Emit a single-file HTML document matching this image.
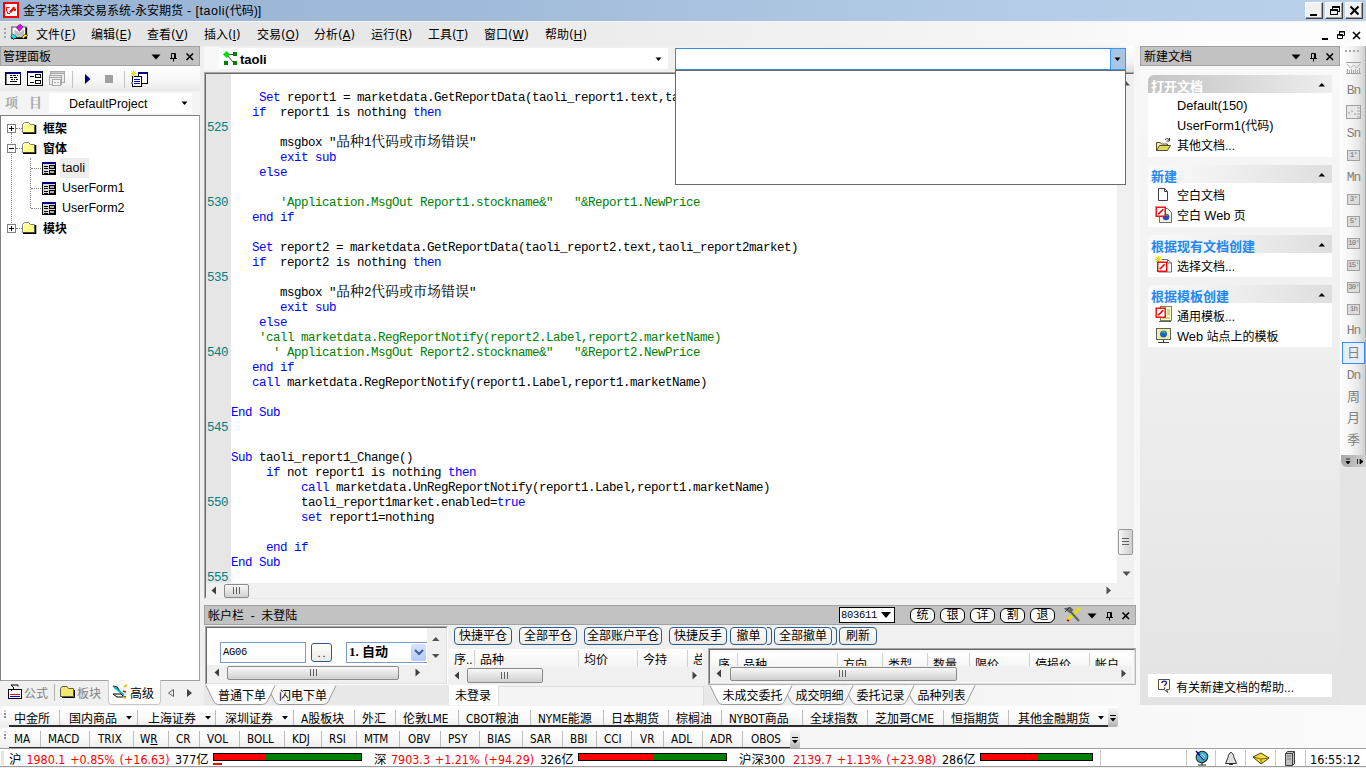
<!DOCTYPE html>
<html><head><meta charset="utf-8"><title>金字塔决策交易系统-永安期货</title>
<style>
*{box-sizing:border-box;margin:0;padding:0}
html,body{width:1366px;height:768px;overflow:hidden;background:#f0f0f0}
body{position:relative;font-family:"Liberation Sans","Noto Sans CJK SC",sans-serif;font-size:12px;color:#000}
.a{position:absolute;white-space:nowrap}
.t{position:absolute;white-space:nowrap;line-height:16px;height:16px;font-size:12px}
#title{left:0;top:0;width:1366px;height:21px;background:linear-gradient(90deg,#99b4d4 0,#a0bbd9 35%,#b4cce7 75%,#b9d1ea 100%)}
.wb{position:absolute;top:2px;width:18px;height:17px;background:#f0f0f0;border:1px solid;border-color:#fff #404040 #404040 #fff;box-shadow:inset -1px -1px 0 #a0a0a0}
#menubar{left:0;top:21px;width:1366px;height:25px;background:linear-gradient(90deg,#e4e4e4 0,#e8e8e8 30%,#eeeeee 50%,#f5f5f5 73%,#fcfcfc 88%,#fdfdfd 100%);border-top:1px solid #f4f4f4}
.phead{position:absolute;background:#c2c2c2;border:1px solid #a2a2a2;height:20px}
.code{font-family:"Liberation Mono","Noto Sans CJK SC",monospace;font-size:12.5px;letter-spacing:-.5px;line-height:15px;height:15px;position:absolute;white-space:pre;color:#000}
.code b{font-weight:normal;color:#0000ff}
.code i{font-style:normal;color:#008000}
.code s{text-decoration:none;font-size:14px;letter-spacing:0;font-family:"Noto Serif CJK SC","Noto Sans CJK SC",serif;line-height:0}
.ln{position:absolute;left:207px;font-family:"Liberation Mono",monospace;font-size:12.5px;letter-spacing:-.5px;line-height:15px;height:15px;color:#008080}
.sep{position:absolute;width:1px;background:#b8b8b8}
.tb{position:absolute;height:19px;border-bottom:2px solid #2c2c2c}
.btn{position:absolute;height:18px;border:1px solid #2c5a8c;border-radius:4px;background:linear-gradient(#ffffff,#ecebe6);font-size:12px;line-height:17px;text-align:center;white-space:nowrap}
.rb{position:absolute;top:608px;width:25px;height:15px;border:1px solid #000;border-radius:6px;background:#fff;font-size:12px;line-height:13px;text-align:center}
.gh{position:absolute;left:1148px;width:184px;height:18px;overflow:hidden;font-weight:bold;font-size:13px;line-height:23px;padding-left:3px;color:#2488f4;background:linear-gradient(90deg,#fafafa,#f0f0f0 40%,#dedede);border-radius:6px 0 0 0}
.gb{position:absolute;left:1148px;width:184px;background:#fff}
.gi{position:absolute;left:1177px;font-size:12px;line-height:16px;white-space:nowrap}
.gl{font-size:12.8px}
.vt{position:absolute;left:1341px;width:25px;text-align:center;font-size:12px;line-height:14px;color:#808080;white-space:nowrap}
.vb{position:absolute;left:1347px;width:13px;height:11px;border:1px solid #a0a0a0;background:#dcdcdc;color:#707070;font-size:7.5px;line-height:9px;text-align:center;font-family:"Liberation Mono",monospace;white-space:nowrap;overflow:hidden;letter-spacing:-.8px}
.st{position:absolute;top:751px;height:17px;line-height:17px;font-size:12.4px;white-space:nowrap;font-family:"DejaVu Sans Condensed","Noto Sans CJK SC",sans-serif}
.l{font-size:11.6px;font-family:"DejaVu Sans Condensed",sans-serif}
.red{color:#ff0000}
.tab{position:absolute;font-size:12px;line-height:16px;white-space:nowrap}
</style></head><body>

<div class="a" id="title"></div>
<svg class="a" style="left:3px;top:2px" width="16" height="16" viewBox="0 0 16 16"><rect x="0" y="0" width="16" height="16" fill="#ff0000"/><rect x="2" y="2" width="12" height="12" fill="#fff"/><path d="M3.5 5.5h3M3.5 5.5v4M4.5 9.5v2h2.5" stroke="#f00" stroke-width="1" fill="none"/><path d="M6 10L10.5 4.5l2 1.5L8 11z" fill="#f00"/><rect x="11" y="7" width="2" height="2" fill="#f00"/></svg>
<div class="t" style="left:23px;top:3px;font-size:12px">金字塔决策交易系统-永安期货<span style="font-size:12.5px;letter-spacing:.5px"> - [taoli(</span>代码<span style="font-size:12.5px">)]</span></div>
<div class="wb" style="left:1305px"></div>
<div class="wb" style="left:1325px"></div>
<div class="wb" style="left:1345px"></div>
<svg class="a" style="left:1305px;top:2px" width="60" height="17" viewBox="0 0 60 17"><rect x="5" y="12" width="7" height="2" fill="#000"/><path d="M27.5 4.5h7v5h-7zM27.5 5.5h7M25.5 7.5h7v5h-7zM25.5 8.5h7" stroke="#000" fill="#f0f0f0" stroke-width="1"/><path d="M27.5 4.5h7v5h-7z" fill="none" stroke="#000"/><path d="M25.5 7.5h7v5h-7z" fill="#f0f0f0" stroke="#000"/><path d="M25 8.5h8M27 5.5h8" stroke="#000"/><path d="M45.5 4.5l8 8M53.5 4.5l-8 8" stroke="#000" stroke-width="2"/></svg>
<div class="a" id="menubar"></div>
<svg class="a" style="left:3px;top:27px" width="4" height="14"><rect x="1" y="1" width="2" height="2" fill="#a0a0a0"/><rect x="1" y="5" width="2" height="2" fill="#a0a0a0"/><rect x="1" y="9" width="2" height="2" fill="#a0a0a0"/></svg>
<svg class="a" style="left:10px;top:24px" width="19" height="18" viewBox="0 0 19 18"><rect x="1" y="2" width="16" height="13" fill="#fff"/><path d="M1.800 15V3h15" stroke="#808080" stroke-width="1.600" fill="none"/><path d="M16.200 3.500v10.700H1.500" stroke="#000" stroke-width="1.800" fill="none"/><path d="M4.500 5.500L9 8.500l5-3V13H4.500z" fill="#c0c0c0"/><path d="M8.500 1.200l2-.7 2 2.200-1 2.500-2.200 2-1.300-2.200-1.500-.8z" fill="#ff00ff" stroke="#000" stroke-width=".5"/><path d="M.6 12.500l2-2.200 3 1.500 1.200 2.200-2.300.3-1 1.500-1.200-2.300z" fill="#00ffff" stroke="#000" stroke-width=".5"/><path d="M12 13.300l2.500-3 3.200.7-1.200 1.500-2 .6-.8 2z" fill="#ffff00" stroke="#000" stroke-width=".5"/></svg>
<div class="t" style="left:36px;top:27px;font-size:12px;font-family:'DejaVu Sans Condensed','Noto Sans CJK SC',sans-serif">文件<span style="font-size:13px">(<u>F</u>)</span></div>
<div class="t" style="left:91px;top:27px;font-size:12px;font-family:'DejaVu Sans Condensed','Noto Sans CJK SC',sans-serif">编辑<span style="font-size:13px">(<u>E</u>)</span></div>
<div class="t" style="left:147px;top:27px;font-size:12px;font-family:'DejaVu Sans Condensed','Noto Sans CJK SC',sans-serif">查看<span style="font-size:13px">(<u>V</u>)</span></div>
<div class="t" style="left:204px;top:27px;font-size:12px;font-family:'DejaVu Sans Condensed','Noto Sans CJK SC',sans-serif">插入<span style="font-size:13px">(<u>I</u>)</span></div>
<div class="t" style="left:257px;top:27px;font-size:12px;font-family:'DejaVu Sans Condensed','Noto Sans CJK SC',sans-serif">交易<span style="font-size:13px">(<u>O</u>)</span></div>
<div class="t" style="left:314px;top:27px;font-size:12px;font-family:'DejaVu Sans Condensed','Noto Sans CJK SC',sans-serif">分析<span style="font-size:13px">(<u>A</u>)</span></div>
<div class="t" style="left:371px;top:27px;font-size:12px;font-family:'DejaVu Sans Condensed','Noto Sans CJK SC',sans-serif">运行<span style="font-size:13px">(<u>R</u>)</span></div>
<div class="t" style="left:428px;top:27px;font-size:12px;font-family:'DejaVu Sans Condensed','Noto Sans CJK SC',sans-serif">工具<span style="font-size:13px">(<u>T</u>)</span></div>
<div class="t" style="left:484px;top:27px;font-size:12px;font-family:'DejaVu Sans Condensed','Noto Sans CJK SC',sans-serif">窗口<span style="font-size:13px">(<u>W</u>)</span></div>
<div class="t" style="left:545px;top:27px;font-size:12px;font-family:'DejaVu Sans Condensed','Noto Sans CJK SC',sans-serif">帮助<span style="font-size:13px">(<u>H</u>)</span></div>
<svg class="a" style="left:1318px;top:29px" width="46" height="14" viewBox="0 0 46 14"><rect x="4" y="9" width="6" height="2" fill="#000"/><path d="M21.5 2.5h5v4h-5zM19.5 5.5h5v4h-5z" fill="#fdfdfd" stroke="#000"/><path d="M19 6h6M21 3h6" stroke="#000"/><path d="M35 3l7 7M42 3l-7 7" stroke="#000" stroke-width="1.6"/></svg>
<div class="phead" style="left:0;top:46px;width:200px"></div>
<div class="t" style="left:3px;top:49px;font-size:12px">管理面板</div>
<svg class="a" style="left:150px;top:50px" width="48" height="14" viewBox="0 0 48 14"><path d="M1.500 4.500h9l-4.500 5z" fill="#000"/><path d="M21.500 8v-4.500h4v4.500M24.500 3.500v4.500" stroke="#000" fill="none"/><path d="M20 8.500h7M23.500 9v2.500" stroke="#000" fill="none"/><path d="M36.500 3.500l6.500 6.500M43 3.500l-6.500 6.500" stroke="#000" stroke-width="1.600"/></svg>
<div class="a" style="left:0;top:66px;width:200px;height:25px;background:linear-gradient(#ffffff,#f6f6f6 60%,#e8e8e8)"></div>
<svg class="a" style="left:4px;top:70px" width="150" height="18" viewBox="0 0 150 18" shape-rendering="crispEdges"><rect x="1" y="2" width="16" height="13" fill="#000"/><rect x="2" y="4" width="14" height="10" fill="#fff"/><rect x="1" y="2" width="16" height="2" fill="#000080"/><rect x="2" y="4" width="1" height="10" fill="#808080"/><path d="M6 5.500h2M9 5.500h3M13 5.500h1M6 7.500h3M10 7.500h3M7 9.500h2M10 9.500h1M12 9.500h2M6 11.500h7" stroke="#000"/><rect x="23" y="1" width="16" height="15" fill="#000"/><rect x="24" y="3" width="14" height="12" fill="#fff"/><rect x="23" y="1" width="16" height="2" fill="#000080"/><rect x="31" y="4" width="6" height="4" fill="#000"/><rect x="32" y="5" width="4" height="2" fill="#fff"/><rect x="31" y="10" width="6" height="4" fill="#000"/><rect x="32" y="11" width="4" height="2" fill="#fff"/><path d="M26 6.500h4M26 12.500h4" stroke="#000"/><rect x="46.500" y="1.500" width="14" height="11" fill="#ececec" stroke="#a8a8a8"/><rect x="46.500" y="1.500" width="14" height="2" fill="#c8c8c8" stroke="#a8a8a8"/><rect x="45.500" y="5.500" width="12" height="9" fill="#ececec" stroke="#a8a8a8"/><path d="M46 7.500h11" stroke="#a8a8a8"/><rect x="48.500" y="9.500" width="8" height="6" fill="#f4f4f4" stroke="#a8a8a8"/><path d="M50 12.500h2M53 12.500h2" stroke="#a8a8a8"/><path d="M68.500 1v17" stroke="#c4c4c4"/><path d="M81 4l5.500 5L81 14z" fill="#000080" shape-rendering="geometricPrecision"/><rect x="101" y="5" width="8" height="8" fill="#a0a0a0"/><path d="M120.500 1v17" stroke="#c4c4c4"/><rect x="134" y="2" width="10" height="12" fill="#000"/><rect x="135" y="4" width="8" height="9" fill="#fff"/><rect x="134" y="2" width="10" height="2" fill="#000080"/><rect x="128" y="6" width="10" height="11" fill="#000"/><rect x="129" y="7" width="8" height="9" fill="#fff"/><path d="M130 9.500h6M130 11.500h6M130 13.500h6" stroke="#0000c0"/><rect x="127" y="12" width="2" height="2" fill="#808080"/><path d="M127 1l5 5M132 1l-5 5M129.500 0v8M127 3.500h5" stroke="#e8e800" shape-rendering="geometricPrecision" stroke-width="1"/></svg>
<div class="a" style="left:0;top:91px;width:200px;height:24px;background:#f4f4f4"></div>
<div class="t" style="left:5px;top:94px;font-size:13px;color:#a8a8a8;font-family:'Noto Serif CJK SC',serif;font-weight:bold">项</div>
<div class="t" style="left:29px;top:94px;font-size:13px;color:#a8a8a8;font-family:'Noto Serif CJK SC',serif;font-weight:bold">目</div>
<div class="a" style="left:49px;top:93px;width:143px;height:20px;background:#fff"></div>
<div class="t" style="left:69px;top:96px;font-size:12.5px">DefaultProject</div>
<svg class="a" style="left:181px;top:101px" width="8" height="5"><path d="M0.500 0.500h6l-3 3.500z" fill="#000"/></svg>
<div class="a" style="left:0;top:115px;width:200px;height:566px;background:#fff;border:1px solid #a0a0a0;border-top-color:#808080;border-left-color:#808080"></div>
<div class="a" style="left:11px;top:133px;width:0;height:90px;border-left:1px dotted #808080"></div>
<div class="a" style="left:30px;top:158px;width:0;height:50px;border-left:1px dotted #808080"></div>
<div class="a" style="left:16px;top:128px;width:6px;height:0;border-top:1px dotted #808080"></div>
<div class="a" style="left:16px;top:148px;width:6px;height:0;border-top:1px dotted #808080"></div>
<div class="a" style="left:16px;top:228px;width:6px;height:0;border-top:1px dotted #808080"></div>
<div class="a" style="left:31px;top:168px;width:10px;height:0;border-top:1px dotted #808080"></div>
<div class="a" style="left:31px;top:188px;width:10px;height:0;border-top:1px dotted #808080"></div>
<div class="a" style="left:31px;top:208px;width:10px;height:0;border-top:1px dotted #808080"></div>
<svg class="a" style="left:7px;top:124px" width="9" height="9"><rect x=".5" y=".5" width="8" height="8" fill="#fff" stroke="#808080"/><path d="M2 4.500h5" stroke="#000"/><path d="M4.500 2v5" stroke="#000"/></svg>
<svg class="a" style="left:7px;top:144px" width="9" height="9"><rect x=".5" y=".5" width="8" height="8" fill="#fff" stroke="#808080"/><path d="M2 4.500h5" stroke="#000"/></svg>
<svg class="a" style="left:7px;top:224px" width="9" height="9"><rect x=".5" y=".5" width="8" height="8" fill="#fff" stroke="#808080"/><path d="M2 4.500h5" stroke="#000"/><path d="M4.500 2v5" stroke="#000"/></svg>
<svg class="a" style="left:22px;top:122px" width="15" height="13" viewBox="0 0 15 13"><path d="M.5 10.500V2.500l2-2h4l2 2h4v8z" fill="#ffff88" stroke="#808080"/><path d="M1.500 9.500V3l1.500-1.500h3.500" stroke="#fff" fill="none"/><path d="M1 11.200h12.500V3" stroke="#000" stroke-width="1.600" fill="none"/></svg>
<div class="t" style="left:43px;top:121px;font-weight:bold;font-size:12px">框架</div>
<svg class="a" style="left:22px;top:142px" width="15" height="13" viewBox="0 0 15 13"><path d="M.5 10.500V2.500l2-2h4l2 2h4v8z" fill="#ffff88" stroke="#808080"/><path d="M1.500 9.500V3l1.500-1.500h3.500" stroke="#fff" fill="none"/><path d="M1 11.200h12.500V3" stroke="#000" stroke-width="1.600" fill="none"/></svg>
<div class="t" style="left:43px;top:141px;font-weight:bold;font-size:12px">窗体</div>
<svg class="a" style="left:22px;top:222px" width="15" height="13" viewBox="0 0 15 13"><path d="M.5 10.500V2.500l2-2h4l2 2h4v8z" fill="#ffff88" stroke="#808080"/><path d="M1.500 9.500V3l1.500-1.500h3.500" stroke="#fff" fill="none"/><path d="M1 11.200h12.500V3" stroke="#000" stroke-width="1.600" fill="none"/></svg>
<div class="t" style="left:43px;top:221px;font-weight:bold;font-size:12px">模块</div>
<div class="a" style="left:60px;top:158px;width:29px;height:20px;background:#ededed"></div>
<svg class="a" style="left:42px;top:161px" width="15" height="15" viewBox="0 0 15 15" shape-rendering="crispEdges"><rect x="0" y="1" width="14" height="13" fill="#000"/><rect x="1" y="3" width="12" height="10" fill="#d8d8d8"/><rect x="0" y="1" width="14" height="2" fill="#000080"/><path d="M2 5.500h4M2 7.500h4M2 10.500h4M2 12.500h4" stroke="#000"/><rect x="7" y="4" width="6" height="4" fill="#000"/><rect x="8" y="5" width="4" height="2" fill="#b0b0b0"/><rect x="7" y="9" width="6" height="4" fill="#000"/><rect x="8" y="10" width="4" height="2" fill="#b0b0b0"/></svg>
<div class="t" style="left:62px;top:160px;font-size:12.5px">taoli</div>
<svg class="a" style="left:42px;top:181px" width="15" height="15" viewBox="0 0 15 15" shape-rendering="crispEdges"><rect x="0" y="1" width="14" height="13" fill="#000"/><rect x="1" y="3" width="12" height="10" fill="#d8d8d8"/><rect x="0" y="1" width="14" height="2" fill="#000080"/><path d="M2 5.500h4M2 7.500h4M2 10.500h4M2 12.500h4" stroke="#000"/><rect x="7" y="4" width="6" height="4" fill="#000"/><rect x="8" y="5" width="4" height="2" fill="#b0b0b0"/><rect x="7" y="9" width="6" height="4" fill="#000"/><rect x="8" y="10" width="4" height="2" fill="#b0b0b0"/></svg>
<div class="t" style="left:62px;top:180px;font-size:12.5px">UserForm1</div>
<svg class="a" style="left:42px;top:201px" width="15" height="15" viewBox="0 0 15 15" shape-rendering="crispEdges"><rect x="0" y="1" width="14" height="13" fill="#000"/><rect x="1" y="3" width="12" height="10" fill="#d8d8d8"/><rect x="0" y="1" width="14" height="2" fill="#000080"/><path d="M2 5.500h4M2 7.500h4M2 10.500h4M2 12.500h4" stroke="#000"/><rect x="7" y="4" width="6" height="4" fill="#000"/><rect x="8" y="5" width="4" height="2" fill="#b0b0b0"/><rect x="7" y="9" width="6" height="4" fill="#000"/><rect x="8" y="10" width="4" height="2" fill="#b0b0b0"/></svg>
<div class="t" style="left:62px;top:200px;font-size:12.5px">UserForm2</div>
<div class="a" style="left:108px;top:680px;width:53px;height:25px;background:#fff;border:1px solid #c8c8c8;border-top:none;border-radius:0 0 4px 4px"></div>
<div class="a" style="left:54px;top:684px;width:1px;height:17px;background:#b0b0b0"></div>
<svg class="a" style="left:7px;top:683px" width="16" height="18" viewBox="0 0 16 18"><rect x="1.500" y="6.500" width="13" height="9" fill="#fff" stroke="#000"/><path d="M4 2h7v1.500M4 2l3 3-3 3" stroke="#000" fill="none"/><path d="M3 11.500h10" stroke="#f00"/><path d="M3 13.500h10" stroke="#00f"/></svg>
<div class="t" style="left:24px;top:686px;font-size:12px;color:#808080">公式</div>
<svg class="a" style="left:59px;top:685px" width="17" height="14" viewBox="0 0 17 14"><path d="M1.500 3.500l1.500-2h5l1.500 2h5v8h-13z" fill="#f0e870" stroke="#606040"/><path d="M3 12.500h12.500V5" stroke="#000" fill="none"/></svg>
<div class="t" style="left:77px;top:686px;font-size:12px;color:#808080">板块</div>
<svg class="a" style="left:112px;top:684px" width="17" height="16" viewBox="0 0 17 16"><path d="M1 2l4 1 6 9 3 1" stroke="#000" stroke-width="1.200" fill="none"/><path d="M2 3l10 8" stroke="#00c0c0" stroke-width="2"/><path d="M1 10l4 3h7l-3-3z" fill="#fff" stroke="#000"/><path d="M12 3l3-2M11 13l3 1" stroke="#e0c000" stroke-width="2"/><path d="M11 7l3 1" stroke="#f00" stroke-width="1.500"/></svg>
<div class="t" style="left:130px;top:686px;font-size:12px">高级</div>
<svg class="a" style="left:166px;top:688px" width="30" height="10"><path d="M7.500 1.500v7L2.500 5z" fill="#f0f0f0" stroke="#606060"/><path d="M21 1v8l5-4z" fill="#404040"/></svg>
<div class="a" style="left:204px;top:47px;width:15px;height:23px;background:#f8f8f8"></div>
<div class="a" style="left:219px;top:48px;width:449px;height:21px;background:#fff"></div>
<svg class="a" style="left:223px;top:51px" width="15" height="15" viewBox="0 0 15 15"><path d="M4 3.500h8M4 4l6 7" stroke="#404040" fill="none"/><path d="M3.500 0L7 3.500 3.500 7 0 3.500z" fill="#00e000"/><rect x="10" y="1" width="4" height="4" fill="#008000"/><rect x="1" y="10" width="4" height="4" fill="#008000"/><rect x="10" y="10" width="4" height="4" fill="#008000"/></svg>
<div class="t" style="left:240px;top:52px;font-weight:bold;font-size:13px">taoli</div>
<svg class="a" style="left:655px;top:57px" width="8" height="5"><path d="M0.500 0.500h6l-3 3.500z" fill="#000"/></svg>
<div class="a" style="left:1126px;top:46px;width:10px;height:26px;background:linear-gradient(#ffffff,#f4f4f4 60%,#dcdcdc)"></div>
<div class="a" style="left:675px;top:48px;width:451px;height:22px;background:#fff;border:1px solid #3c8cdc"></div>
<div class="a" style="left:1110px;top:48px;width:16px;height:22px;background:#a9c5e2;border:1px solid #3399ff"></div>
<svg class="a" style="left:1114px;top:57px" width="8" height="5"><path d="M0.500 0.500h6l-3 3.500z" fill="#000"/></svg>
<div class="a" style="left:204px;top:72px;width:931px;height:527px;background:#fff;border:1px solid #a8a8a8;border-right-color:#e8e8e8;border-bottom-color:#e8e8e8"></div>
<div class="a" style="left:205px;top:73px;width:929px;height:525px;border:1px solid #696969;border-right-color:#f4f4f4;border-bottom-color:#f4f4f4"></div>
<div class="a" style="left:206px;top:74px;width:25px;height:509px;background:#e6e6e6"></div>
<div class="a" style="left:1117px;top:74px;width:17px;height:509px;background:#f0f0f0"></div>
<div class="a" style="left:206px;top:583px;width:928px;height:15px;background:#f0f0f0"></div>
<div class="a" style="left:1118px;top:529px;width:15px;height:26px;border:1px solid #9a9a9a;border-radius:2px;background:linear-gradient(90deg,#f8f8f8,#e0e0e0 50%,#cfcfcf)"></div>
<svg class="a" style="left:1121px;top:537px" width="9" height="10"><path d="M1 1.500h7M1 4.500h7M1 7.500h7" stroke="#606060"/></svg>
<svg class="a" style="left:1122px;top:571px" width="9" height="6"><path d="M.5 .5h8L4.500 5z" fill="#505050"/></svg>
<svg class="a" style="left:1106px;top:586px" width="6" height="10"><path d="M.5 .5v8L5 4.500z" fill="#505050"/></svg>
<svg class="a" style="left:211px;top:586px" width="6" height="9"><path d="M5 .5v8L.5 4.500z" fill="#404040"/></svg>
<div class="a" style="left:224px;top:584px;width:25px;height:14px;border:1px solid #8a8a8a;border-radius:2px;background:linear-gradient(#f8f8f8,#e4e4e4 50%,#d0d0d0)"></div>
<svg class="a" style="left:232px;top:587px" width="9" height="8"><path d="M1.500 0v7M4.500 0v7M7.500 0v7" stroke="#606060"/></svg>
<div class="code" style="left:231px;top:91px">    <b>Set</b> report1 = marketdata.GetReportData(taoli_report1.text,taoli_report1market)</div>
<div class="code" style="left:231px;top:106px">   <b>if</b>  report1 is nothing <b>then</b></div>
<div class="code" style="left:231px;top:136px">       msgbox "<s>品种</s>1<s>代码或市场错误</s>"</div>
<div class="code" style="left:231px;top:151px">       <b>exit sub</b></div>
<div class="code" style="left:231px;top:166px">    <b>else</b></div>
<div class="code" style="left:231px;top:196px">       <i>'Application.MsgOut Report1.stockname&amp;"   "&amp;Report1.NewPrice</i></div>
<div class="code" style="left:231px;top:211px">   <b>end if</b></div>
<div class="code" style="left:231px;top:241px">   <b>Set</b> report2 = marketdata.GetReportData(taoli_report2.text,taoli_report2market)</div>
<div class="code" style="left:231px;top:256px">   <b>if</b>  report2 is nothing <b>then</b></div>
<div class="code" style="left:231px;top:286px">       msgbox "<s>品种</s>2<s>代码或市场错误</s>"</div>
<div class="code" style="left:231px;top:301px">       <b>exit sub</b></div>
<div class="code" style="left:231px;top:316px">    <b>else</b></div>
<div class="code" style="left:231px;top:331px">    <i>'call marketdata.RegReportNotify(report2.Label,report2.marketName)</i></div>
<div class="code" style="left:231px;top:346px">      <i>' Application.MsgOut Report2.stockname&amp;"   "&amp;Report2.NewPrice</i></div>
<div class="code" style="left:231px;top:361px">   <b>end if</b></div>
<div class="code" style="left:231px;top:376px">   <b>call</b> marketdata.RegReportNotify(report1.Label,report1.marketName)</div>
<div class="code" style="left:231px;top:406px"><b>End Sub</b></div>
<div class="code" style="left:231px;top:451px"><b>Sub</b> taoli_report1_Change()</div>
<div class="code" style="left:231px;top:466px">     <b>if</b> not report1 is nothing <b>then</b></div>
<div class="code" style="left:231px;top:481px">          <b>call</b> marketdata.UnRegReportNotify(report1.Label,report1.marketName)</div>
<div class="code" style="left:231px;top:496px">          taoli_report1market.enabled=<b>true</b></div>
<div class="code" style="left:231px;top:511px">          <b>set</b> report1=nothing</div>
<div class="code" style="left:231px;top:541px">     <b>end if</b></div>
<div class="code" style="left:231px;top:556px"><b>End Sub</b></div>
<div class="ln" style="top:121px">525</div>
<div class="ln" style="top:196px">530</div>
<div class="ln" style="top:271px">535</div>
<div class="ln" style="top:346px">540</div>
<div class="ln" style="top:421px">545</div>
<div class="ln" style="top:496px">550</div>
<div class="ln" style="top:571px">555</div>
<svg class="a" style="left:1121px;top:80px" width="10" height="6"><path d="M0 5.500L4.500 .5l4.500 5z" fill="#505050"/></svg>
<div class="a" style="left:675px;top:70px;width:451px;height:115px;background:#fff;border:1px solid #6a6a6a"></div>
<div class="a" style="left:1134px;top:46px;width:6px;height:659px;background:#f7f7f7"></div>
<div class="a" style="left:1140px;top:46px;width:200px;height:659px;background:linear-gradient(#f9f9f9,#e3e3e3)"></div>
<div class="a" style="left:1340px;top:46px;width:26px;height:659px;background:#e4e4e4"></div>
<div class="phead" style="left:1140px;top:46px;width:200px"></div>
<div class="t" style="left:1144px;top:49px;font-size:12px">新建文档</div>
<svg class="a" style="left:1290px;top:50px" width="48" height="14" viewBox="0 0 48 14"><path d="M1.500 4.500h9l-4.500 5z" fill="#000"/><path d="M21.500 8v-4.500h4v4.500M24.500 3.500v4.500" stroke="#000" fill="none"/><path d="M20 8.500h7M23.500 9v2.500" stroke="#000" fill="none"/><path d="M36.500 3.500l6.500 6.500M43 3.500l-6.500 6.500" stroke="#000" stroke-width="1.600"/></svg>
<div class="gh" style="top:75px;color:#fff;background:linear-gradient(90deg,#c4c4c4,#d8d8d8 50%,#eeeeee);border-radius:6px 0 0 0">打开文档</div>
<svg class="a" style="left:1318px;top:82px" width="8" height="5"><path d="M.5 4.500h6.500L3.800 1z" fill="#000"/></svg>
<div class="gb" style="top:93px;height:64px"></div>
<div class="gi" style="top:98px"><span class="gl">Default(150)</span></div>
<div class="gi" style="top:118px"><span class="gl">UserForm1(</span>代码<span class="gl">)</span></div>
<svg class="a" style="left:1155px;top:137px" width="17" height="15" viewBox="0 0 17 15"><path d="M1.500 13.500v-8h4l1 1.500h6v2" fill="#f8f0a0" stroke="#505030"/><path d="M1.500 13.500l3-5h11l-3 5z" fill="#e0d860" stroke="#505030"/><path d="M10 2.500c2-1.500 4-1 4.500 1M14.500 1v3h-3" stroke="#303030" fill="none"/></svg>
<div class="gi" style="top:138px">其他文档...</div>
<div class="gh" style="top:165px">新建</div>
<svg class="a" style="left:1318px;top:172px" width="8" height="5"><path d="M.5 4.500h6.500L3.800 1z" fill="#000"/></svg>
<div class="gb" style="top:183px;height:44px"></div>
<svg class="a" style="left:1157px;top:187px" width="13" height="15" viewBox="0 0 13 15"><path d="M1.500 1.500h6l3 3v9h-9z" fill="#fff" stroke="#404040"/><path d="M7.500 1.500v3h3" fill="none" stroke="#404040"/></svg>
<div class="gi" style="top:188px">空白文档</div>
<svg class="a" style="left:1155px;top:206px" width="18" height="18" viewBox="0 0 18 18"><path d="M4.500 2.500h8l4 4v10h-12z" fill="#f4f4d8" stroke="#707070"/><circle cx="11" cy="11" r="3.300" fill="#2848d0"/><path d="M9 10c1-1.500 3-1.500 3.500 0" stroke="#30c030" stroke-width="1.500" fill="none"/><rect x="1.2" y="1.2" width="9" height="9" fill="#fff" stroke="#f00000" stroke-width="1.400"/><path d="M3.2 8.2l5-5" stroke="#f00000" stroke-width="1.600"/></svg>
<div class="gi" style="top:208px">空白 <span class="gl">Web</span> 页</div>
<div class="gh" style="top:235px">根据现有文档创建</div>
<svg class="a" style="left:1318px;top:242px" width="8" height="5"><path d="M.5 4.500h6.500L3.800 1z" fill="#000"/></svg>
<div class="gb" style="top:253px;height:24px"></div>
<svg class="a" style="left:1155px;top:256px" width="18" height="18" viewBox="0 0 18 18"><path d="M3.500 3.500h9l4 3.500v9h-13z" fill="#fff" stroke="#707070"/><path d="M12.500 3.500v3.500h4" fill="none" stroke="#707070"/><path d="M1 1l5 5M6 1L1 6M3.500 0v7M0 3.500h7" stroke="#e8e000"/><rect x="2.7" y="6.2" width="9" height="9" fill="#fff" stroke="#f00000" stroke-width="1.400"/><path d="M4.7 13.2l5-5" stroke="#f00000" stroke-width="1.600"/></svg>
<div class="gi" style="top:259px">选择文档...</div>
<div class="gh" style="top:285px">根据模板创建</div>
<svg class="a" style="left:1318px;top:292px" width="8" height="5"><path d="M.5 4.500h6.500L3.800 1z" fill="#000"/></svg>
<div class="gb" style="top:303px;height:44px"></div>
<svg class="a" style="left:1155px;top:305px" width="18" height="18" viewBox="0 0 18 18"><rect x="5.500" y="1.500" width="11" height="14" fill="#ffffc0" stroke="#808060"/><path d="M12 5h3M12 7h3M12 9h3M7 13h8" stroke="#a0a080"/><path d="M4 16.500h12" stroke="#606060"/><rect x="1.2" y="3.2" width="9" height="9" fill="#fff" stroke="#f00000" stroke-width="1.400"/><path d="M3.2 10.2l5-5" stroke="#f00000" stroke-width="1.600"/></svg>
<div class="gi" style="top:309px">通用模板...</div>
<svg class="a" style="left:1155px;top:327px" width="17" height="17" viewBox="0 0 17 17"><rect x="1.500" y="1.500" width="14" height="11" fill="#f0f0a0" stroke="#606060"/><circle cx="8.500" cy="7" r="3.500" fill="#2060d0"/><path d="M6.500 5.500c1-1 3-1 3.500.5" stroke="#40c040" fill="none" stroke-width="1.500"/><path d="M8.500 12.500v2.500M3 15.500h11" stroke="#404040"/></svg>
<div class="gi" style="top:329px"><span class="gl">Web</span> 站点上的模板</div>
<div class="a" style="left:1148px;top:674px;width:184px;height:23px;background:#fff"></div>
<svg class="a" style="left:1157px;top:678px" width="15" height="16" viewBox="0 0 15 16"><path d="M1.500 1.500h11v10h-3l1.500 3-4-3h-5.500z" fill="#ffffe0" stroke="#505050"/><path d="M5 5c0-2.500 4.500-2.500 4.500 0 0 1.500-2 1.500-2 3M7.500 9.500v1.200" stroke="#1010a0" stroke-width="1.300" fill="none"/></svg>
<div class="gi" style="left:1176px;top:680px">有关新建文档的帮助...</div>
<div class="a" style="left:1340px;top:46px;width:26px;height:418px;background:linear-gradient(90deg,#fdfdfd,#f6f6f6 40%,#e6e6e6 75%,#cfcfcf);border-right:1px solid #a8a8a8;border-radius:0 0 6px 6px"></div>
<svg class="a" style="left:1345px;top:50px" width="18" height="3"><rect x="0" y="0" width="2" height="2" fill="#a8a8a8"/><rect x="4" y="0" width="2" height="2" fill="#a8a8a8"/><rect x="8" y="0" width="2" height="2" fill="#a8a8a8"/><rect x="12" y="0" width="2" height="2" fill="#a8a8a8"/></svg>
<svg class="a" style="left:1346px;top:61px" width="16" height="14" viewBox="0 0 16 14"><path d="M0 1.500h15M0 12.500h15" stroke="#a0a0a0"/><path d="M1 3l3.500 4 3-3 3 3L14 3" stroke="#b0b0b0" fill="none"/><path d="M1.500 8v4M3.500 9v3M5.500 8v4M7.500 9v3M9.500 8v4M11.500 9v3M13.500 7v5" stroke="#a8a8a8" fill="none"/></svg>
<svg class="a" style="left:1346px;top:105px" width="16" height="15" viewBox="0 0 16 15"><rect x=".5" y=".5" width="14" height="13" fill="#e8e8e8" stroke="#a0a0a0"/><path d="M2 8h2M5 6h2M8 9h2M11 3h3M11 6h3M11 9h3M11 12h3" stroke="#a0a0a0"/></svg>
<div class="vt" style="top:84px;font-family:'Liberation Mono',monospace;font-size:13px;letter-spacing:-1px">Bn</div>
<div class="vt" style="top:127px;font-family:'Liberation Mono',monospace;font-size:13px;letter-spacing:-1px">Sn</div>
<div class="vt" style="top:171px;font-family:'Liberation Mono',monospace;font-size:13px;letter-spacing:-1px">Mn</div>
<div class="vt" style="top:324px;font-family:'Liberation Mono',monospace;font-size:13px;letter-spacing:-1px">Hn</div>
<div class="vt" style="top:369px;font-family:'Liberation Mono',monospace;font-size:13px;letter-spacing:-1px">Dn</div>
<div class="vb" style="top:150px">1'</div>
<div class="vb" style="top:194px">3'</div>
<div class="vb" style="top:216px">5'</div>
<div class="vb" style="top:238px">10'</div>
<div class="vb" style="top:260px">15'</div>
<div class="vb" style="top:282px">30'</div>
<div class="vb" style="top:304px">1h</div>
<div class="a" style="left:1342px;top:342px;width:23px;height:22px;border:1px solid #3c8cf0;background:#e4eefc"></div>
<div class="vt" style="top:346px;font-size:13px">日</div>
<div class="vt" style="top:390px;font-size:13px">周</div>
<div class="vt" style="top:411px;font-size:13px">月</div>
<div class="vt" style="top:433px;font-size:13px">季</div>
<div class="a" style="left:1341px;top:455px;width:25px;height:12px;background:linear-gradient(90deg,#a8a8a8,#d0d0d0);border-radius:0 0 0 6px"></div>
<svg class="a" style="left:1345px;top:458px" width="20" height="8"><path d="M1 1h4M1 3.500h4L3 6z" stroke="#000" fill="#000" stroke-width=".8"/><path d="M12.500 1v5M15 1v5l3-2.500z" stroke="#000" fill="#000" stroke-width=".8"/></svg>
<div class="phead" style="left:204px;top:605px;width:932px"></div>
<div class="t" style="left:208px;top:608px;font-size:12px">帐户栏 &nbsp;- &nbsp;未登陆</div>
<div class="a" style="left:839px;top:607px;width:56px;height:16px;background:#fff;border:1px solid #000"></div>
<div class="a" style="left:841px;top:608px;font-family:'Liberation Mono',monospace;font-size:10.5px;line-height:14px;letter-spacing:-.3px">803611</div>
<svg class="a" style="left:881px;top:612px" width="10" height="6"><path d="M0 0h10L5 6z" fill="#000"/></svg>
<div class="rb" style="left:910px">统</div>
<div class="rb" style="left:940px">银</div>
<div class="rb" style="left:970px">详</div>
<div class="rb" style="left:1000px">割</div>
<div class="rb" style="left:1030px">退</div>
<svg class="a" style="left:1064px;top:606px" width="19" height="17" viewBox="0 0 19 17"><path d="M3 14L16 2" stroke="#e8e000" stroke-width="2.500"/><path d="M3 14l2 1" stroke="#c00000" stroke-width="1.500"/><path d="M2 3l4-1 2 2-2 2zM6 5l9 10" stroke="#606060" stroke-width="2" fill="#808080"/><path d="M1 6l5-5" stroke="#404040"/></svg>
<svg class="a" style="left:1086px;top:609px" width="48" height="14" viewBox="0 0 48 14"><path d="M1.500 4.500h9l-4.500 5z" fill="#000"/><path d="M21.500 8v-4.500h4v4.500M24.500 3.500v4.500" stroke="#000" fill="none"/><path d="M20 8.500h7M23.500 9v2.500" stroke="#000" fill="none"/><path d="M36.500 3.500l6.500 6.500M43 3.500l-6.500 6.500" stroke="#000" stroke-width="1.600"/></svg>
<div class="a" style="left:205px;top:626px;width:243px;height:59px;background:#fff;border:1px solid #a8a8a8;border-right-color:#fff;border-bottom-color:#fff"></div>
<div class="a" style="left:206px;top:627px;width:241px;height:57px;border:1px solid #696969;border-right-color:#e0e0e0;border-bottom-color:#e0e0e0"></div>
<div class="a" style="left:207px;top:665px;width:239px;height:18px;background:#f0f0f0"></div>
<div class="a" style="left:427px;top:628px;width:19px;height:38px;background:#f0f0f0"></div>
<svg class="a" style="left:432px;top:636px" width="8" height="24"><path d="M0 5h7.500L3.800 1z" fill="#505050"/><path d="M0 18h7.500L3.800 22z" fill="#505050"/></svg>
<div class="a" style="left:220px;top:642px;width:86px;height:21px;background:#fff;border:1px solid #7a9cc8"></div>
<div class="a" style="left:223px;top:645px;font-family:'Liberation Mono',monospace;font-size:10.5px;line-height:14px;letter-spacing:-.3px">AG06</div>
<div class="a" style="left:311px;top:643px;width:21px;height:19px;background:linear-gradient(#fff,#eceae4);border:1px solid #2c5a8c;border-radius:3px;font-size:11px;line-height:18px;text-align:center;letter-spacing:2px;padding-left:2px">..</div>
<div class="a" style="left:346px;top:642px;width:81px;height:21px;background:#fff;border:1px solid #7a9cc8;border-right:none"></div>
<div class="a" style="left:349px;top:644px;font-weight:bold;font-size:13px;line-height:16px;font-family:'Liberation Serif','Noto Sans CJK SC',serif">1. 自动</div>
<div class="a" style="left:411px;top:644px;width:15px;height:17px;background:linear-gradient(#d8e4fc,#b4c8f4);border-radius:2px"></div>
<svg class="a" style="left:414px;top:649px" width="10" height="8"><path d="M1 1l4 4 4-4" stroke="#3c5c9c" stroke-width="2" fill="none"/></svg>
<svg class="a" style="left:214px;top:668px" width="6" height="9"><path d="M5 .5v8L.5 4.500z" fill="#404040"/></svg>
<svg class="a" style="left:415px;top:668px" width="6" height="9"><path d="M.5 .5v8L5 4.500z" fill="#404040"/></svg>
<div class="a" style="left:227px;top:666px;width:172px;height:14px;border:1px solid #8a8a8a;border-radius:2px;background:linear-gradient(#f8f8f8,#e4e4e4 50%,#d0d0d0)"></div>
<svg class="a" style="left:309px;top:669px" width="9" height="8"><path d="M1.500 0v7M4.500 0v7M7.500 0v7" stroke="#606060"/></svg>
<div class="a" style="left:204px;top:685px;width:245px;height:20px;background:#e8e8e8"></div>
<div class="a" style="left:704px;top:685px;width:432px;height:20px;background:linear-gradient(90deg,#e8e8e8,#f4f4f4 60%,#f8f8f8)"></div>
<svg class="a" style="left:203px;top:685px" width="137" height="21"><path d="M64 0.500L71.5 16Q73 19.500 76.5 19.500H120.5Q124 19.500 125.5 16L133 0.500" fill="#f8f8f8" stroke="#9a9a9a"/><path d="M3 0.500L10.5 16Q12 19.500 15.5 19.500H59.5Q63 19.500 64.5 16L72 0.500" fill="#ffffff" stroke="#9a9a9a"/></svg>
<div class="tab" style="left:218px;top:688px;width:48px;text-align:center">普通下单</div>
<div class="tab" style="left:279px;top:688px;width:48px;text-align:center">闪电下单</div>
<div class="btn" style="left:454px;top:627px;width:58px">快捷平仓</div>
<div class="btn" style="left:519px;top:627px;width:58px">全部平仓</div>
<div class="btn" style="left:584px;top:627px;width:78px">全部账户平仓</div>
<div class="btn" style="left:669px;top:627px;width:58px">快捷反手</div>
<div class="btn" style="left:730px;top:627px;width:37px">撤单</div>
<div class="btn" style="left:774px;top:627px;width:58px">全部撤单</div>
<div class="btn" style="left:839px;top:627px;width:38px">刷新</div>
<div class="a" style="left:767px;top:627px;width:5px;height:18px;border:1px solid #2c5a8c;border-left:none;border-radius:0 4px 4px 0"></div>
<div class="a" style="left:832px;top:627px;width:5px;height:18px;border:1px solid #2c5a8c;border-left:none;border-radius:0 4px 4px 0"></div>
<div class="a" style="left:449px;top:649px;width:254px;height:18px;background:linear-gradient(#ffffff,#f4f4f4)"></div>
<div class="a" style="left:474px;top:650px;width:1px;height:17px;background:#d0d0d0"></div>
<div class="a" style="left:578px;top:650px;width:1px;height:17px;background:#d0d0d0"></div>
<div class="a" style="left:637px;top:650px;width:1px;height:17px;background:#d0d0d0"></div>
<div class="a" style="left:687px;top:650px;width:1px;height:17px;background:#d0d0d0"></div>
<div class="t" style="left:454px;top:652px;font-size:12px">序..</div>
<div class="t" style="left:480px;top:652px;font-size:12px">品种</div>
<div class="t" style="left:584px;top:652px;font-size:12px">均价</div>
<div class="t" style="left:643px;top:652px;font-size:12px">今持</div>
<div class="t" style="left:693px;top:652px;font-size:12px;width:9px;overflow:hidden">总</div>
<div class="a" style="left:703px;top:649px;width:5px;height:19px;background:#f0f0f0"></div>
<div class="a" style="left:449px;top:667px;width:254px;height:17px;background:#f0f0f0"></div>
<svg class="a" style="left:454px;top:671px" width="6" height="9"><path d="M5 .5v8L.5 4.500z" fill="#404040"/></svg>
<svg class="a" style="left:692px;top:671px" width="6" height="9"><path d="M.5 .5v8L5 4.500z" fill="#404040"/></svg>
<div class="a" style="left:467px;top:668px;width:76px;height:15px;border:1px solid #8a8a8a;border-radius:2px;background:linear-gradient(#f8f8f8,#e4e4e4 50%,#d0d0d0)"></div>
<svg class="a" style="left:500px;top:672px" width="9" height="8"><path d="M1.500 0v7M4.500 0v7M7.500 0v7" stroke="#606060"/></svg>
<div class="a" style="left:449px;top:685px;width:49px;height:21px;background:#fff;border-bottom:1px solid #c0c0c0"></div>
<div class="a" style="left:498px;top:686px;width:206px;height:20px;background:#f4f4f4;border:1px solid #dcdcdc;border-bottom-color:#b8b8b8"></div>
<div class="t" style="left:455px;top:688px;font-size:12px">未登录</div>
<div class="a" style="left:708px;top:648px;width:428px;height:37px;background:#fff;border:1px solid #a8a8a8;border-right-color:#b8b8b8;border-bottom-color:#b8b8b8"></div>
<div class="a" style="left:709px;top:649px;width:426px;height:35px;border:1px solid #696969;border-right-color:#e0e0e0;border-bottom-color:#e0e0e0;background:#f8f8f8"></div>
<div class="a" style="left:711px;top:652px;width:421px;height:14px;overflow:hidden;background:linear-gradient(#ffffff,#f6f6f6)" id="l2h"></div>
<div class="a" style="left:718px;top:657px;height:9px;overflow:hidden;font-size:12px;line-height:16px">序</div>
<div class="a" style="left:743px;top:657px;height:9px;overflow:hidden;font-size:12px;line-height:16px">品种</div>
<div class="a" style="left:843px;top:657px;height:9px;overflow:hidden;font-size:12px;line-height:16px">方向</div>
<div class="a" style="left:888px;top:657px;height:9px;overflow:hidden;font-size:12px;line-height:16px">类型</div>
<div class="a" style="left:933px;top:657px;height:9px;overflow:hidden;font-size:12px;line-height:16px">数量</div>
<div class="a" style="left:975px;top:657px;height:9px;overflow:hidden;font-size:12px;line-height:16px">限价</div>
<div class="a" style="left:1035px;top:657px;height:9px;overflow:hidden;font-size:12px;line-height:16px">停损价</div>
<div class="a" style="left:1095px;top:657px;height:9px;overflow:hidden;font-size:12px;line-height:16px">帐户</div>
<div class="a" style="left:737px;top:653px;width:1px;height:13px;background:#d0d0d0"></div>
<div class="a" style="left:837px;top:653px;width:1px;height:13px;background:#d0d0d0"></div>
<div class="a" style="left:882px;top:653px;width:1px;height:13px;background:#d0d0d0"></div>
<div class="a" style="left:927px;top:653px;width:1px;height:13px;background:#d0d0d0"></div>
<div class="a" style="left:969px;top:653px;width:1px;height:13px;background:#d0d0d0"></div>
<div class="a" style="left:1029px;top:653px;width:1px;height:13px;background:#d0d0d0"></div>
<div class="a" style="left:1089px;top:653px;width:1px;height:13px;background:#d0d0d0"></div>
<div class="a" style="left:711px;top:666px;width:421px;height:16px;background:#f0f0f0"></div>
<svg class="a" style="left:716px;top:669px" width="6" height="9"><path d="M5 .5v8L.5 4.500z" fill="#404040"/></svg>
<svg class="a" style="left:1121px;top:669px" width="6" height="9"><path d="M.5 .5v8L5 4.500z" fill="#404040"/></svg>
<div class="a" style="left:730px;top:667px;width:227px;height:14px;border:1px solid #8a8a8a;border-radius:2px;background:linear-gradient(#f8f8f8,#e4e4e4 50%,#d0d0d0)"></div>
<svg class="a" style="left:838px;top:670px" width="9" height="8"><path d="M1.500 0v7M4.500 0v7M7.500 0v7" stroke="#606060"/></svg>
<svg class="a" style="left:707px;top:685px" width="272" height="21"><path d="M198 0.500L205.5 16Q207 19.500 210.5 19.500H255.5Q259 19.500 260.5 16L268 0.500" fill="#f8f8f8" stroke="#9a9a9a"/><path d="M137 0.500L144.5 16Q146 19.500 149.5 19.500H194.5Q198 19.500 199.5 16L207 0.500" fill="#f8f8f8" stroke="#9a9a9a"/><path d="M76 0.500L83.5 16Q85 19.500 88.5 19.500H133.5Q137 19.500 138.5 16L146 0.500" fill="#f8f8f8" stroke="#9a9a9a"/><path d="M3 0.500L10.5 16Q12 19.500 15.5 19.500H72.5Q76 19.500 77.5 16L85 0.500" fill="#ffffff" stroke="#9a9a9a"/></svg>
<div class="tab" style="left:722px;top:688px;width:61px;text-align:center">未成交委托</div>
<div class="tab" style="left:795px;top:688px;width:49px;text-align:center">成交明细</div>
<div class="tab" style="left:856px;top:688px;width:49px;text-align:center">委托记录</div>
<div class="tab" style="left:917px;top:688px;width:49px;text-align:center">品种列表</div>
<div class="a" style="left:0;top:705px;width:1366px;height:44px;background:linear-gradient(90deg,#f0f0f0,#f4f4f4 50%,#fafafa)"></div>
<div class="a" style="left:0;top:706px;width:1118px;height:21px;background:linear-gradient(#ffffff,#fbfbfb 50%,#ececec);border-radius:5px 0 0 0"></div>
<div class="a" style="left:0;top:728px;width:800px;height:20px;background:linear-gradient(#ffffff,#fbfbfb 50%,#ececec);border-radius:5px 0 0 0"></div>
<svg class="a" style="left:4px;top:710px" width="4" height="10"><rect x="0" y="0" width="2" height="2" fill="#d0d0d0"/><rect x="0" y="3" width="2" height="2" fill="#909090"/><rect x="0" y="6" width="2" height="2" fill="#909090"/></svg>
<svg class="a" style="left:4px;top:731px" width="4" height="10"><rect x="0" y="0" width="2" height="2" fill="#d0d0d0"/><rect x="0" y="3" width="2" height="2" fill="#909090"/><rect x="0" y="6" width="2" height="2" fill="#909090"/></svg>
<div class="tb" style="left:9px;top:708px;width:50px"></div>
<div class="t" style="left:14px;top:711px;font-size:12px">中金所</div>
<div class="a" style="left:59px;top:710px;width:1px;height:16px;background:#bcbcbc"></div>
<div class="tb" style="left:59px;top:708px;width:78px"></div>
<div class="t" style="left:69px;top:711px;font-size:12px">国内商品</div>
<svg class="a" style="left:126px;top:716px" width="6" height="4"><path d="M0 0h6L3 3.500z" fill="#000"/></svg>
<div class="a" style="left:137px;top:710px;width:1px;height:16px;background:#bcbcbc"></div>
<div class="tb" style="left:137px;top:708px;width:78px"></div>
<div class="t" style="left:148px;top:711px;font-size:12px">上海证券</div>
<svg class="a" style="left:205px;top:716px" width="6" height="4"><path d="M0 0h6L3 3.500z" fill="#000"/></svg>
<div class="a" style="left:215px;top:710px;width:1px;height:16px;background:#bcbcbc"></div>
<div class="tb" style="left:215px;top:708px;width:78px"></div>
<div class="t" style="left:225px;top:711px;font-size:12px">深圳证券</div>
<svg class="a" style="left:282px;top:716px" width="6" height="4"><path d="M0 0h6L3 3.500z" fill="#000"/></svg>
<div class="a" style="left:293px;top:710px;width:1px;height:16px;background:#bcbcbc"></div>
<div class="tb" style="left:293px;top:708px;width:61px"></div>
<div class="t" style="left:301px;top:711px;font-size:12px"><span class="l">A</span>股板块</div>
<div class="a" style="left:354px;top:710px;width:1px;height:16px;background:#bcbcbc"></div>
<div class="tb" style="left:354px;top:708px;width:41px"></div>
<div class="t" style="left:362px;top:711px;font-size:12px">外汇</div>
<div class="a" style="left:395px;top:710px;width:1px;height:16px;background:#bcbcbc"></div>
<div class="tb" style="left:395px;top:708px;width:63px"></div>
<div class="t" style="left:403px;top:711px;font-size:12px">伦敦<span class="l">LME</span></div>
<div class="a" style="left:458px;top:710px;width:1px;height:16px;background:#bcbcbc"></div>
<div class="tb" style="left:458px;top:708px;width:72px"></div>
<div class="t" style="left:466px;top:711px;font-size:12px"><span class="l">CBOT</span>粮油</div>
<div class="a" style="left:530px;top:710px;width:1px;height:16px;background:#bcbcbc"></div>
<div class="tb" style="left:530px;top:708px;width:73px"></div>
<div class="t" style="left:538px;top:711px;font-size:12px"><span class="l">NYME</span>能源</div>
<div class="a" style="left:603px;top:710px;width:1px;height:16px;background:#bcbcbc"></div>
<div class="tb" style="left:603px;top:708px;width:65px"></div>
<div class="t" style="left:611px;top:711px;font-size:12px">日本期货</div>
<div class="a" style="left:668px;top:710px;width:1px;height:16px;background:#bcbcbc"></div>
<div class="tb" style="left:668px;top:708px;width:53px"></div>
<div class="t" style="left:676px;top:711px;font-size:12px">棕榈油</div>
<div class="a" style="left:721px;top:710px;width:1px;height:16px;background:#bcbcbc"></div>
<div class="tb" style="left:721px;top:708px;width:81px"></div>
<div class="t" style="left:729px;top:711px;font-size:12px"><span class="l">NYBOT</span>商品</div>
<div class="a" style="left:802px;top:710px;width:1px;height:16px;background:#bcbcbc"></div>
<div class="tb" style="left:802px;top:708px;width:65px"></div>
<div class="t" style="left:810px;top:711px;font-size:12px">全球指数</div>
<div class="a" style="left:867px;top:710px;width:1px;height:16px;background:#bcbcbc"></div>
<div class="tb" style="left:867px;top:708px;width:76px"></div>
<div class="t" style="left:875px;top:711px;font-size:12px">芝加哥<span class="l">CME</span></div>
<div class="a" style="left:943px;top:710px;width:1px;height:16px;background:#bcbcbc"></div>
<div class="tb" style="left:943px;top:708px;width:65px"></div>
<div class="t" style="left:951px;top:711px;font-size:12px">恒指期货</div>
<div class="a" style="left:1008px;top:710px;width:1px;height:16px;background:#bcbcbc"></div>
<div class="tb" style="left:1008px;top:708px;width:100px"></div>
<div class="t" style="left:1018px;top:711px;font-size:12px">其他金融期货</div>
<svg class="a" style="left:1098px;top:716px" width="6" height="4"><path d="M0 0h6L3 3.500z" fill="#000"/></svg>
<div class="a" style="left:1108px;top:708px;width:10px;height:19px;background:linear-gradient(#f6f6f6,#dcdcdc 50%,#b0b0b0);border-radius:0 3px 3px 0"></div>
<svg class="a" style="left:1110px;top:715px" width="7" height="8"><path d="M0 .5h6" stroke="#000"/><path d="M0 3h6L3 6.500z" fill="#000"/></svg>
<div class="tb" style="left:9px;top:730px;width:31px"></div>
<div class="t l" style="left:14px;top:731px">MA</div>
<div class="a" style="left:40px;top:731px;width:1px;height:16px;background:#bcbcbc"></div>
<div class="tb" style="left:40px;top:730px;width:49px"></div>
<div class="t l" style="left:48px;top:731px">MACD</div>
<div class="a" style="left:89px;top:731px;width:1px;height:16px;background:#bcbcbc"></div>
<div class="tb" style="left:89px;top:730px;width:44px"></div>
<div class="t l" style="left:98px;top:731px">TRIX</div>
<div class="a" style="left:133px;top:731px;width:1px;height:16px;background:#bcbcbc"></div>
<div class="tb" style="left:133px;top:730px;width:35px"></div>
<div class="t l" style="left:140px;top:731px">W<u>R</u></div>
<div class="a" style="left:168px;top:731px;width:1px;height:16px;background:#bcbcbc"></div>
<div class="tb" style="left:168px;top:730px;width:31px"></div>
<div class="t l" style="left:176px;top:731px">CR</div>
<div class="a" style="left:199px;top:731px;width:1px;height:16px;background:#bcbcbc"></div>
<div class="tb" style="left:199px;top:730px;width:40px"></div>
<div class="t l" style="left:207px;top:731px">VOL</div>
<div class="a" style="left:239px;top:731px;width:1px;height:16px;background:#bcbcbc"></div>
<div class="tb" style="left:239px;top:730px;width:45px"></div>
<div class="t l" style="left:247px;top:731px">BOLL</div>
<div class="a" style="left:284px;top:731px;width:1px;height:16px;background:#bcbcbc"></div>
<div class="tb" style="left:284px;top:730px;width:37px"></div>
<div class="t l" style="left:292px;top:731px">KDJ</div>
<div class="a" style="left:321px;top:731px;width:1px;height:16px;background:#bcbcbc"></div>
<div class="tb" style="left:321px;top:730px;width:35px"></div>
<div class="t l" style="left:329px;top:731px">RSI</div>
<div class="a" style="left:356px;top:731px;width:1px;height:16px;background:#bcbcbc"></div>
<div class="tb" style="left:356px;top:730px;width:43px"></div>
<div class="t l" style="left:364px;top:731px">MTM</div>
<div class="a" style="left:399px;top:731px;width:1px;height:16px;background:#bcbcbc"></div>
<div class="tb" style="left:399px;top:730px;width:41px"></div>
<div class="t l" style="left:408px;top:731px">OBV</div>
<div class="a" style="left:440px;top:731px;width:1px;height:16px;background:#bcbcbc"></div>
<div class="tb" style="left:440px;top:730px;width:39px"></div>
<div class="t l" style="left:448px;top:731px">PSY</div>
<div class="a" style="left:479px;top:731px;width:1px;height:16px;background:#bcbcbc"></div>
<div class="tb" style="left:479px;top:730px;width:43px"></div>
<div class="t l" style="left:487px;top:731px">BIAS</div>
<div class="a" style="left:522px;top:731px;width:1px;height:16px;background:#bcbcbc"></div>
<div class="tb" style="left:522px;top:730px;width:40px"></div>
<div class="t l" style="left:530px;top:731px">SAR</div>
<div class="a" style="left:562px;top:731px;width:1px;height:16px;background:#bcbcbc"></div>
<div class="tb" style="left:562px;top:730px;width:34px"></div>
<div class="t l" style="left:570px;top:731px">BBI</div>
<div class="a" style="left:596px;top:731px;width:1px;height:16px;background:#bcbcbc"></div>
<div class="tb" style="left:596px;top:730px;width:35px"></div>
<div class="t l" style="left:604px;top:731px">CCI</div>
<div class="a" style="left:631px;top:731px;width:1px;height:16px;background:#bcbcbc"></div>
<div class="tb" style="left:631px;top:730px;width:32px"></div>
<div class="t l" style="left:640px;top:731px">VR</div>
<div class="a" style="left:663px;top:731px;width:1px;height:16px;background:#bcbcbc"></div>
<div class="tb" style="left:663px;top:730px;width:39px"></div>
<div class="t l" style="left:671px;top:731px">ADL</div>
<div class="a" style="left:702px;top:731px;width:1px;height:16px;background:#bcbcbc"></div>
<div class="tb" style="left:702px;top:730px;width:40px"></div>
<div class="t l" style="left:710px;top:731px">ADR</div>
<div class="a" style="left:742px;top:731px;width:1px;height:16px;background:#bcbcbc"></div>
<div class="tb" style="left:742px;top:730px;width:48px"></div>
<div class="t l" style="left:751px;top:731px">OBOS</div>
<div class="a" style="left:790px;top:730px;width:10px;height:19px;background:linear-gradient(#f6f6f6,#dcdcdc 50%,#b0b0b0);border-radius:0 3px 3px 0"></div>
<svg class="a" style="left:792px;top:737px" width="7" height="8"><path d="M0 .5h6" stroke="#000"/><path d="M0 3h6L3 6.500z" fill="#000"/></svg>
<div class="a" style="left:0;top:748px;width:1366px;height:20px;background:#fff;border-top:1px solid #a0a0a0"></div>
<div class="a" style="left:0;top:766px;width:1366px;height:1px;background:#9c9c9c"></div>
<div class="a" style="left:0;top:767px;width:1366px;height:1px;background:#f0f0f0"></div>
<div class="a" style="left:1px;top:751px;width:3px;height:14px;background:#e6e2e2"></div>
<div class="st" style="left:9px">沪</div>
<div class="st red" style="left:26.4px">1980.1</div>
<div class="st red" style="left:70.2px">+0.85%</div>
<div class="st red" style="left:119.6px">(+16.63)</div>
<div class="st" style="left:175px">377亿</div>
<div class="a" style="left:213px;top:753px;width:149px;height:8px;background:#008000;border:1px solid #000"></div>
<div class="a" style="left:214px;top:754px;width:52px;height:6px;background:#ff0000"></div>
<div class="a" style="left:213px;top:763px;width:9px;height:2px;background:#ff0000"></div>
<div class="st" style="left:374px">深</div>
<div class="st red" style="left:391px">7903.3</div>
<div class="st red" style="left:434.8px">+1.21%</div>
<div class="st red" style="left:484.2px">(+94.29)</div>
<div class="st" style="left:540px">326亿</div>
<div class="a" style="left:578px;top:753px;width:149px;height:8px;background:#008000;border:1px solid #000"></div>
<div class="a" style="left:579px;top:754px;width:75px;height:6px;background:#ff0000"></div>
<div class="st" style="left:739px">沪深300</div>
<div class="st red" style="left:793px">2139.7</div>
<div class="st red" style="left:836.8px">+1.13%</div>
<div class="st red" style="left:886.2px">(+23.98)</div>
<div class="st" style="left:942px">286亿</div>
<div class="a" style="left:980px;top:753px;width:113px;height:8px;background:#008000;border:1px solid #000"></div>
<div class="a" style="left:981px;top:754px;width:56px;height:6px;background:#ff0000"></div>
<div class="a" style="left:1100px;top:750px;width:1px;height:16px;background:#c8c8c8"></div>
<div class="a" style="left:1186px;top:750px;width:1px;height:16px;background:#c8c8c8"></div>
<div class="a" style="left:1215px;top:750px;width:1px;height:16px;background:#c8c8c8"></div>
<div class="a" style="left:1245px;top:750px;width:1px;height:16px;background:#c8c8c8"></div>
<div class="a" style="left:1275px;top:750px;width:1px;height:16px;background:#c8c8c8"></div>
<div class="a" style="left:1305px;top:750px;width:1px;height:16px;background:#c8c8c8"></div>
<div class="st" style="left:1310px;font-size:12.5px">16:55:12</div>
<svg class="a" style="left:1193px;top:750px" width="18" height="17" viewBox="0 0 18 17"><ellipse cx="9" cy="7" rx="6" ry="5.500" fill="#40b0c0" stroke="#202020" transform="rotate(-30 9 7)"/><path d="M3 1l8 9" stroke="#0000c0" stroke-width="1.500"/><path d="M5 15h8M9 12v3" stroke="#202020"/><path d="M7 5l4 4M9 4l3 3" stroke="#e0ffff" stroke-width=".8"/></svg>
<svg class="a" style="left:1223px;top:751px" width="16" height="15" viewBox="0 0 16 15"><path d="M8 1.500c-1.500 0-2.500 2-3 5L2.500 12.500h11L11 6.500c-.5-3-1.500-5-3-5z" fill="#e0e0e0" stroke="#303030"/><path d="M6 13.500h4" stroke="#303030"/></svg>
<svg class="a" style="left:1252px;top:752px" width="18" height="13" viewBox="0 0 18 13"><path d="M1 5l8-4 8 5-8 6z" fill="#f0e040" stroke="#504000"/><path d="M1 5l8 2 8-1M9 7v5" stroke="#806000" fill="none"/></svg>
<svg class="a" style="left:1283px;top:750px" width="14" height="17" viewBox="0 0 14 17"><path d="M2.500 3.500l2-2h7v12l-2 2h-7z" fill="#c0c0c0" stroke="#404040"/><path d="M2.500 3.500h7v12M9.500 3.500l2-2" stroke="#404040" fill="none"/><path d="M4 6h4M4 9h4" stroke="#707070"/></svg>
</body></html>
